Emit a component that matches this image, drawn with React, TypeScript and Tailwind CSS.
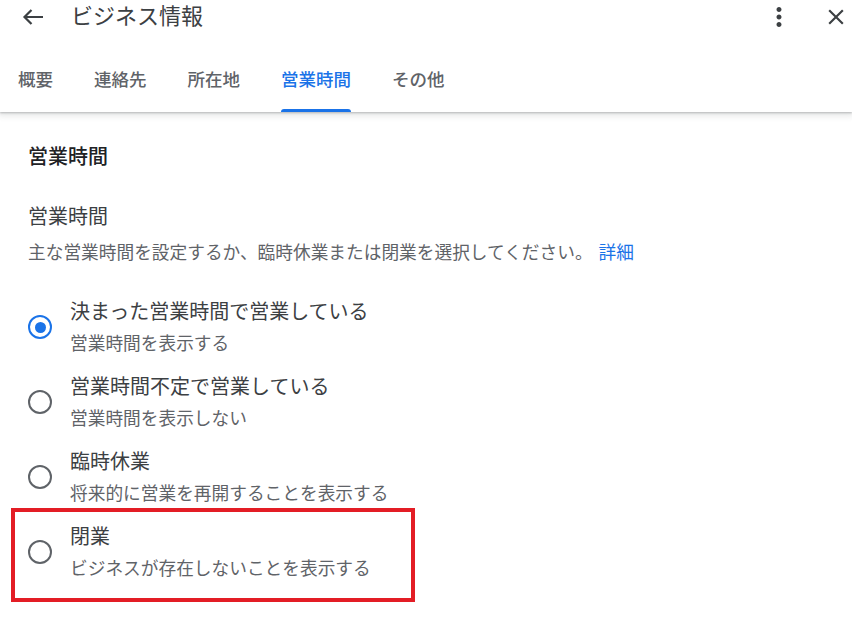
import { useState } from "react"

const tabs = ["概要", "連絡先", "所在地", "営業時間", "その他"]

const options = [
  { label: "決まった営業時間で営業している", sub: "営業時間を表示する" },
  { label: "営業時間不定で営業している", sub: "営業時間を表示しない" },
  { label: "臨時休業", sub: "将来的に営業を再開することを表示する" },
  { label: "閉業", sub: "ビジネスが存在しないことを表示する" },
]

function Radio({ checked }: { checked: boolean }) {
  return (
    <div
      className={
        checked
          ? "w-[24px] h-[24px] shrink-0 rounded-full border-[2.5px] border-[#1a73e8] flex items-center justify-center"
          : "w-[24px] h-[24px] shrink-0 rounded-full border-[2.5px] border-[#5f6368]"
      }
    >
      {checked && <div className="w-[11px] h-[11px] rounded-full bg-[#1a73e8]" />}
    </div>
  )
}

export default function App() {
  const [active, setActive] = useState(3)
  const [selected, setSelected] = useState(0)

  return (
    <div className="w-[852px] h-[618px] overflow-hidden bg-white font-['Roboto','Noto_Sans_CJK_JP',sans-serif]">
      {/* header */}
      <div className="h-[112px] flex flex-col bg-white shadow-[0_1px_2px_0_rgba(60,64,67,0.3),0_2px_6px_2px_rgba(60,64,67,0.12)] relative z-10">
        <div className="h-[34px] flex items-center pl-[22px] pr-[3px]">
          <svg className="w-[22px] h-[16px]" viewBox="0 0 22 16" fill="none" stroke="#3c4043" strokeWidth="2.2">
            <path d="M21 8H2.5M9.5 1L2.5 8l7 7" />
          </svg>
          <div className="ml-[27px] text-[22px] leading-[34px] text-[#3c4043]">ビジネス情報</div>
          <div className="ml-auto flex items-center gap-[29px]">
            <svg className="w-[30px] h-[30px]" viewBox="0 0 24 24" fill="#3c4043">
              <path d="M12 8c1.1 0 2-.9 2-2s-.9-2-2-2-2 .9-2 2 .9 2 2 2zm0 2c-1.1 0-2 .9-2 2s.9 2 2 2 2-.9 2-2-.9-2-2-2zm0 6c-1.1 0-2 .9-2 2s.9 2 2 2 2-.9 2-2-.9-2-2-2z" />
            </svg>
            <svg className="w-[26px] h-[26px]" viewBox="0 0 24 24" fill="#3c4043">
              <path d="M19 6.41L17.59 5 12 10.59 6.41 5 5 6.41 10.59 12 5 17.59 6.41 19 12 13.41 17.59 19 19 17.59 13.41 12z" />
            </svg>
          </div>
        </div>
        <div className="flex-1 flex items-end pl-[18px] gap-[41px]">
          {tabs.map((t, i) => (
            <button key={t} onClick={() => setActive(i)} className="flex flex-col items-stretch">
              <span
                className={
                  i === active
                    ? "text-[17.5px] leading-[24px] text-[#1a73e8] font-medium"
                    : "text-[17.5px] leading-[24px] text-[#5f6368] font-medium"
                }
              >
                {t}
              </span>
              <span
                className={
                  i === active
                    ? "mt-[17px] h-[3px] rounded-t-[3px] bg-[#1a73e8]"
                    : "mt-[17px] h-[3px] bg-transparent"
                }
              />
            </button>
          ))}
        </div>
      </div>

      {/* content */}
      <div className="pl-[28px] pt-[33px]">
        <div className="text-[20px] leading-[24px] text-[#202124] font-medium">営業時間</div>
        <div className="mt-[36px] text-[20px] leading-[24px] text-[#3c4043]">営業時間</div>
        <div className="mt-[12px] text-[17.7px] leading-[24px] text-[#5f6368]">
          主な営業時間を設定するか、臨時休業または閉業を選択してください。
          <span className="ml-[6px] text-[#1a73e8]">詳細</span>
        </div>

        <div className="mt-[33px] flex flex-col gap-[17px]">
          {options.map((o, i) => (
            <div key={o.label} className="relative">
              <button onClick={() => setSelected(i)} className="flex items-center gap-[18px] text-left">
                <Radio checked={selected === i} />
                <div className="flex flex-col">
                  <span className="text-[20px] leading-[28px] text-[#3c4043]">{o.label}</span>
                  <span className="mt-[6px] text-[17.7px] leading-[24px] text-[#5f6368]">{o.sub}</span>
                </div>
              </button>
              {i === 3 && (
                <div className="absolute left-[-17px] top-[-15px] w-[404px] h-[94px] border-4 border-[#e31d25] pointer-events-none" />
              )}
            </div>
          ))}
        </div>
      </div>
    </div>
  )
}
